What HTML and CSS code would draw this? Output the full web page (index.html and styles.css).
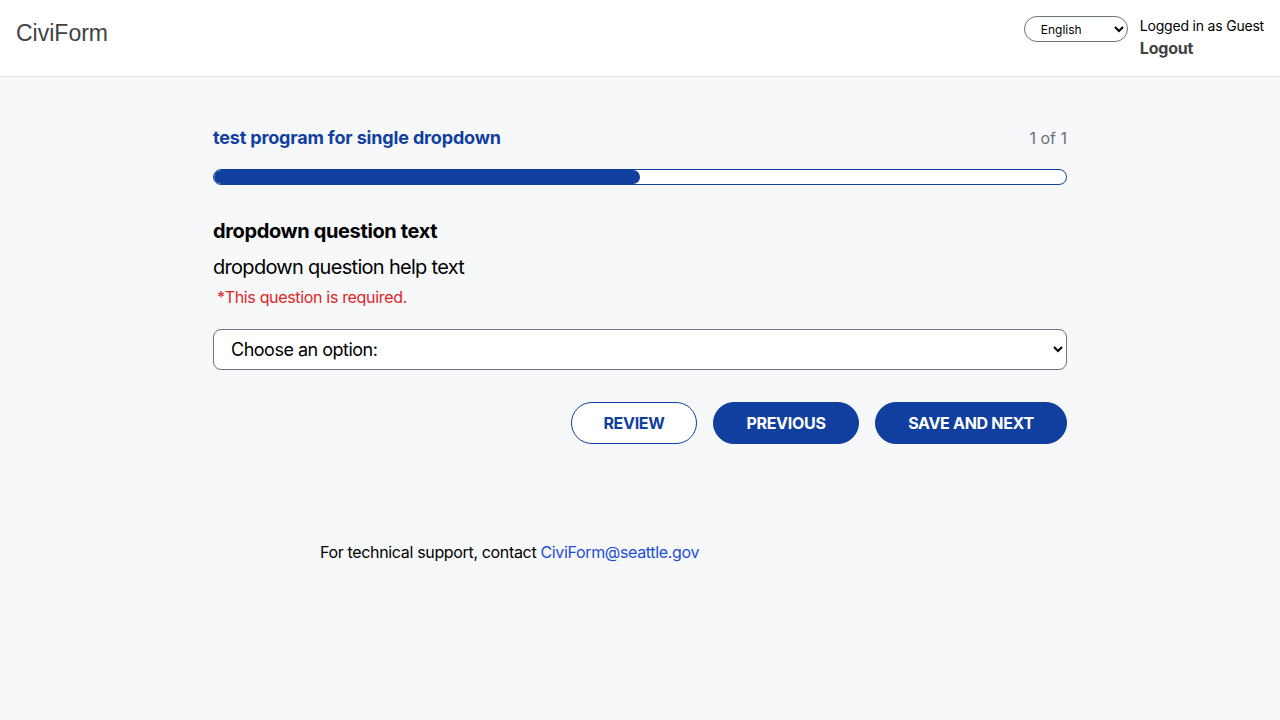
FILE: index.html
```html
<!DOCTYPE html>
<html>
<head>
<meta charset="utf-8">
<link rel="stylesheet" href="styles.css">
</head>
<body>
<header class="topbar">
  <div class="brand">CiviForm</div>
  <div class="user-area">
    <select class="lang-select"><option>English</option></select>
    <div class="user-info">
      <div class="logged">Logged in as Guest</div>
      <a class="logout" href="#">Logout</a>
    </div>
  </div>
</header>
<main class="main">
  <div class="form-wrap">
    <div class="program-row">
      <div class="program-title">test program for single dropdown</div>
      <div class="step-count">1 of 1</div>
    </div>
    <div class="progress"><div class="progress-fill" style="width:50%"></div></div>
    <div class="question-text">dropdown question text</div>
    <div class="help-text">dropdown question help text</div>
    <div class="required">*This question is required.</div>
    <select class="dropdown"><option>Choose an option:</option></select>
    <div class="actions">
      <button class="btn btn-outline">REVIEW</button>
      <button class="btn btn-solid btn-prev">PREVIOUS</button>
      <button class="btn btn-solid btn-next">SAVE AND NEXT</button>
    </div>
  </div>
  <footer class="support">For technical support, contact <a href="#" class="mail">CiviForm@seattle.gov</a></footer>
</main>
</body>
</html>
```
FILE: styles.css
```css
* { box-sizing: border-box; }
html, body { margin: 0; padding: 0; }
body {
  font-family: Inter, "Noto Sans", sans-serif;
  background: #f7f8fa;
  color: #000;
  height: 720px;
}
.topbar {
  height: 77px;
  background: #fff;
  border-bottom: 1px solid #e5e7eb;
  display: flex;
  justify-content: space-between;
  align-items: flex-start;
  padding: 0 16px;
}
.brand {
  font-family: "Liberation Sans", Arial, sans-serif;
  font-size: 23px;
  color: #424242;
  margin-top: 20px;
}
.user-area {
  display: flex;
  align-items: flex-start;
  margin-top: 16px;
}
.lang-select {
  width: 104px;
  height: 26px;
  border: 1px solid #6b7280;
  border-radius: 13px;
  background: #fff;
  font-family: Inter, sans-serif;
  font-size: 12px;
  padding: 0 4px 0 12px;
  margin-right: 12px;
  color: #000;
}
.user-info { display: flex; flex-direction: column; }
.logged { font-size: 14px; line-height: 20px; letter-spacing: -0.2px; }
.logout {
  font-size: 16px;
  font-weight: 700;
  color: #424242;
  text-decoration: none;
  line-height: 24px;
  letter-spacing: -0.2px;
}
.main { padding-top: 49px; }
.form-wrap {
  width: 854px;
  margin: 0 auto;
}
.program-row {
  display: flex;
  justify-content: space-between;
  align-items: baseline;
}
.program-title {
  color: #113fa0;
  font-weight: 700;
  font-size: 18px;
  line-height: 24px;
  letter-spacing: -0.16px;
}
.step-count {
  color: #6b7280;
  font-size: 16px;
}
.progress {
  margin-top: 19px;
  height: 16px;
  border: 1px solid #113fa0;
  border-radius: 8px;
  background: #fff;
  overflow: hidden;
}
.progress-fill {
  height: 100%;
  background: #113fa0;
  border-radius: 8px;
}
.question-text {
  margin-top: 34px;
  font-size: 20px;
  font-weight: 700;
  line-height: 24px;
  letter-spacing: -0.36px;
}
.help-text {
  margin-top: 12px;
  font-size: 20px;
  line-height: 24px;
  letter-spacing: -0.7px;
}
.required {
  margin-top: 8px;
  padding-left: 4px;
  color: #dc2626;
  font-size: 16px;
  line-height: 20px;
  letter-spacing: -0.33px;
}
.dropdown {
  display: block;
  width: 100%;
  margin-top: 22px;
  height: 41px;
  border: 1px solid #6b7280;
  border-radius: 8px;
  background: #fff;
  font-family: Inter, sans-serif;
  font-size: 18px;
  letter-spacing: -0.5px;
  padding: 0 8px 0 13px;
  color: #000;
}
.actions {
  display: flex;
  justify-content: flex-end;
  gap: 16px;
  margin-top: 32px;
}
.btn {
  height: 42px;
  border-radius: 21px;
  font-family: Inter, sans-serif;
  font-size: 16px;
  font-weight: 700;
  letter-spacing: -0.3px;
  border: 1px solid #113fa0;
}
.btn-outline { width: 126px; background: #fff; color: #113fa0; }
.btn-solid { background: #113fa0; color: #fff; }
.btn-prev { width: 146px; }
.btn-next { width: 192px; }
.support {
  margin-top: 96px;
  padding-left: 320px;
  font-size: 16px;
  line-height: 24px;
  letter-spacing: -0.34px;
}
.mail { color: #1d4ed8; text-decoration: none; }
```
